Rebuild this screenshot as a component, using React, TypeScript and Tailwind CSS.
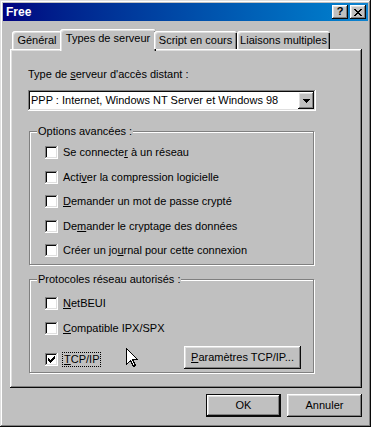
import React from 'react';

// Win98 bevels
const RAISED =
  'shadow-[inset_-1px_-1px_#0a0a0a,inset_1px_1px_#fff,inset_-2px_-2px_#808080,inset_2px_2px_#dfdfdf]';
const WINDOW =
  'shadow-[inset_-1px_-1px_#0a0a0a,inset_1px_1px_#dfdfdf,inset_-2px_-2px_#808080,inset_2px_2px_#fff]';
const SUNKEN =
  'shadow-[inset_-1px_-1px_#fff,inset_1px_1px_#808080,inset_-2px_-2px_#dfdfdf,inset_2px_2px_#0a0a0a]';

const TABS = [
  { label: 'Général', width: 'w-[50px]' },
  { label: 'Types de serveur', width: 'w-[96px]', active: true },
  { label: 'Script en cours', width: 'w-[83px]' },
  { label: 'Liaisons multiples', width: 'w-[93px]' },
];

const CHECK_PIXELS = [
  [6, 0], [5, 1], [6, 1], [0, 2], [4, 2], [5, 2], [6, 2],
  [0, 3], [1, 3], [3, 3], [4, 3], [5, 3], [0, 4], [1, 4], [2, 4], [3, 4], [4, 4],
  [1, 5], [2, 5], [3, 5], [2, 6],
];

const CLOSE_PIXELS = [
  [0, 0], [1, 0], [6, 0], [7, 0], [1, 1], [2, 1], [5, 1], [6, 1],
  [2, 2], [3, 2], [4, 2], [5, 2], [3, 3], [4, 3],
  [2, 4], [3, 4], [4, 4], [5, 4], [1, 5], [2, 5], [5, 5], [6, 5],
  [0, 6], [1, 6], [6, 6], [7, 6],
];

function Checkbox({ checked }: { checked?: boolean }) {
  return (
    <span className={`flex items-center justify-center w-[13px] h-[13px] shrink-0 bg-white ${SUNKEN}`}>
      {checked && (
        <svg width="7" height="7" viewBox="0 0 7 7" shapeRendering="crispEdges">
          {CHECK_PIXELS.map(([x, y]) => (
            <rect key={`${x}-${y}`} x={x} y={y} width="1" height="1" fill="#000" />
          ))}
        </svg>
      )}
    </span>
  );
}

function CheckRow({ children, checked, focused }: { children: React.ReactNode; checked?: boolean; focused?: boolean }) {
  return (
    <div className="flex items-center h-[13px]">
      <Checkbox checked={checked} />
      {focused ? (
        <span className="ml-[4px] px-[1px] leading-[13px] border border-dotted border-black">{children}</span>
      ) : (
        <span className="ml-[5px] leading-[13px]">{children}</span>
      )}
    </div>
  );
}

function GroupBox({ title, className, children }: { title: string; className: string; children: React.ReactNode }) {
  return (
    <div className={`relative ml-[1px] w-[285px] border border-[#808080] shadow-[inset_1px_1px_#fff,1px_1px_#fff] ${className}`}>
      <span className="absolute -top-[7px] left-[7px] px-[1px] bg-[#c0c0c0] leading-[13px]">{title}</span>
      {children}
    </div>
  );
}

function Key({ children }: { children: React.ReactNode }) {
  return <span className="underline underline-offset-[1px]">{children}</span>;
}

export default function App() {
  return (
    <div
      className={`relative w-[371px] h-[427px] p-[3px] bg-[#c0c0c0] text-black text-[11px] flex flex-col select-none ${WINDOW}`}
      style={{ fontFamily: '"Liberation Sans", Arial, sans-serif' }}
    >
      {/* title bar */}
      <div className="h-[18px] flex items-center justify-between pl-[3px] bg-gradient-to-r from-[#000080] to-[#1084d0]">
        <span className="text-white font-bold text-[12px] leading-[18px]">Free</span>
        <div className="flex gap-[2px] mr-[2px]">
          <span className={`w-[16px] h-[14px] bg-[#c0c0c0] flex items-center justify-center font-bold text-[11px] leading-none pb-[1px] ${RAISED}`}>
            ?
          </span>
          <span className={`w-[16px] h-[14px] bg-[#c0c0c0] flex items-center justify-center pl-[0px] ${RAISED}`}>
            <svg width="8" height="7" viewBox="0 0 8 7" shapeRendering="crispEdges">
              {CLOSE_PIXELS.map(([x, y]) => (
                <rect key={`${x}-${y}`} x={x} y={y} width="1" height="1" fill="#000" />
              ))}
            </svg>
          </span>
        </div>
      </div>

      {/* tab strip */}
      <div className="relative z-10 mt-[8px] ml-[9px] h-[20px] flex items-end">
        {TABS.map((tab) =>
          tab.active ? (
            <div
              key={tab.label}
              className={`${tab.width} h-[22px] -mb-[2px] -mx-[2px] pt-[3px] text-center leading-[13px] bg-[#c0c0c0] rounded-t-[3px] shadow-[inset_1px_1px_#fff,inset_2px_2px_#dfdfdf,inset_-1px_0_#0a0a0a,inset_-2px_0_#808080]`}
            >
              {tab.label}
            </div>
          ) : (
            <div
              key={tab.label}
              className={`${tab.width} h-[18px] pt-[3px] text-center leading-[13px] bg-[#c0c0c0] rounded-t-[3px] shadow-[inset_1px_1px_#fff,inset_2px_2px_#dfdfdf,inset_-1px_0_#0a0a0a,inset_-2px_0_#808080]`}
            >
              {tab.label}
            </div>
          ),
        )}
      </div>

      {/* tab panel */}
      <div className={`ml-[7px] w-[352px] h-[339px] pl-[18px] pt-[19px] flex flex-col ${RAISED}`}>
        <div className="h-[13px] leading-[13px]">
          Type de <Key>s</Key>erveur d'accès distant :
        </div>
        <div className={`mt-[9px] w-[288px] h-[21px] bg-white flex items-center pl-[3px] pr-[2px] ${SUNKEN}`}>
          <span className="flex-1 leading-[13px]">PPP : Internet, Windows NT Server et Windows 98</span>
          <span className={`w-[16px] h-[17px] bg-[#c0c0c0] flex items-center justify-center ${RAISED}`}>
            <svg width="7" height="4" viewBox="0 0 7 4" shapeRendering="crispEdges">
              <path d="M0 0h7v1H0zM1 1h5v1H1zM2 2h3v1H2zM3 3h1v1H3z" fill="#000" />
            </svg>
          </span>
        </div>

        <GroupBox title="Options avancées :" className="mt-[20px] h-[134px] pl-[15px] pt-[14px] flex flex-col gap-[11.5px]">
          <CheckRow>
            Se connecte<Key>r</Key> à un réseau
          </CheckRow>
          <CheckRow>
            Acti<Key>v</Key>er la compression logicielle
          </CheckRow>
          <CheckRow>
            <Key>D</Key>emander un mot de passe crypté
          </CheckRow>
          <CheckRow>
            De<Key>m</Key>ander le cryptage des données
          </CheckRow>
          <CheckRow>
            Créer un jo<Key>u</Key>rnal pour cette connexion
          </CheckRow>
        </GroupBox>

        <GroupBox title="Protocoles réseau autorisés :" className="mt-[14px] h-[94px] pl-[15px] pr-[12px] pt-[17px] flex flex-col gap-[11.5px]">
          <CheckRow>
            <Key>N</Key>etBEUI
          </CheckRow>
          <CheckRow>
            <Key>C</Key>ompatible IPX/SPX
          </CheckRow>
          <div className="flex items-center">
            <CheckRow checked focused>
              <Key>T</Key>CP/IP
            </CheckRow>
            <button className={`ml-auto mb-[4px] w-[117px] h-[23px] bg-[#c0c0c0] leading-[13px] ${RAISED}`}>
              <Key>P</Key>aramètres TCP/IP...
            </button>
          </div>
        </GroupBox>
      </div>

      {/* dialog buttons */}
      <div className="mt-[6px] mr-[6px] flex justify-end gap-[6px]">
        <button className="w-[75px] h-[23px] border border-[#0a0a0a] bg-[#c0c0c0] shadow-[inset_-1px_-1px_#0a0a0a,inset_1px_1px_#fff,inset_-2px_-2px_#808080,inset_2px_2px_#dfdfdf] leading-[13px]">
          OK
        </button>
        <button className={`w-[75px] h-[23px] bg-[#c0c0c0] leading-[13px] ${RAISED}`}>Annuler</button>
      </div>

      {/* mouse pointer */}
      <svg className="absolute left-[126px] top-[348px]" width="12" height="19" viewBox="0 0 12 19" shapeRendering="crispEdges">
        <path d="M0.5 0.5V16.5L4.5 12.5L7.5 18.5L9.5 17.5L6.5 11.5H11.5Z" fill="#fff" stroke="#000" strokeWidth="1" />
      </svg>
    </div>
  );
}
